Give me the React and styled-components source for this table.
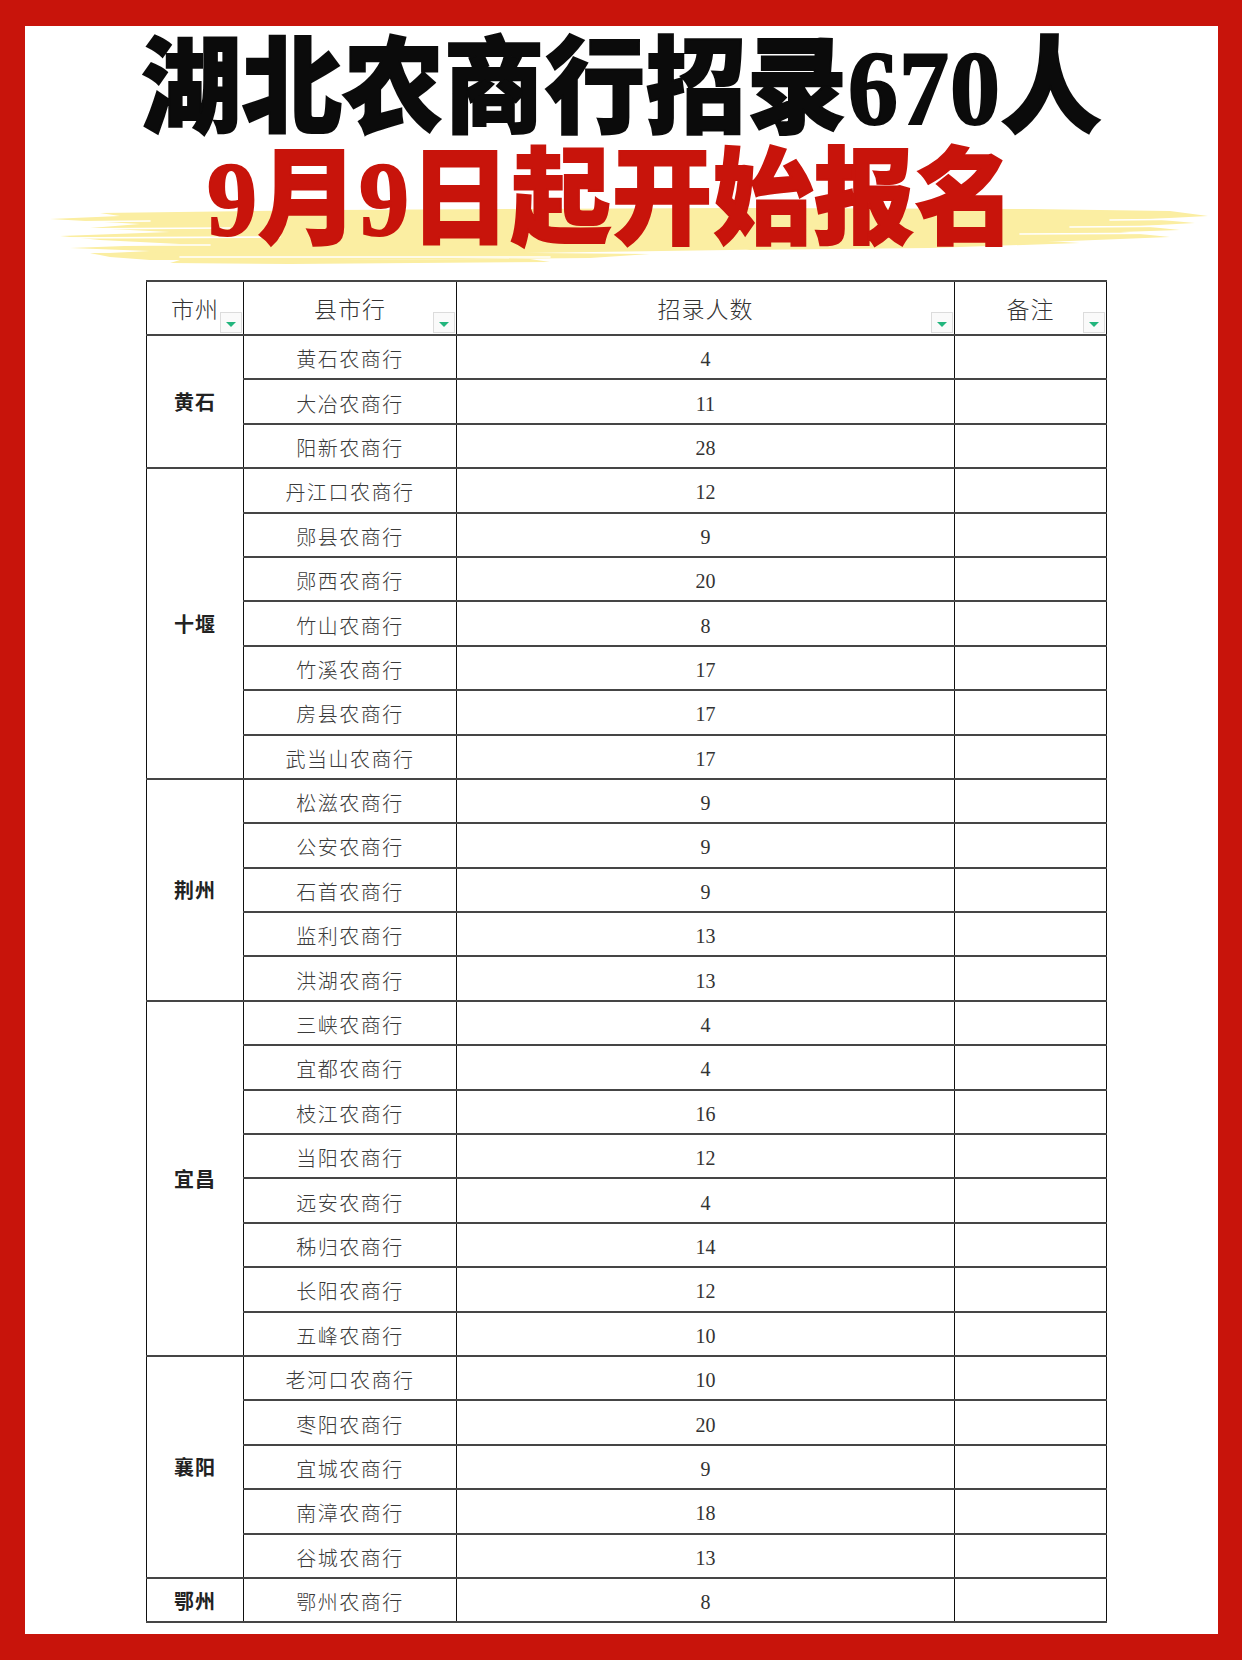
import styled, { createGlobalStyle } from 'styled-components'

const GlobalStyle = createGlobalStyle`
  html, body {
    margin: 0;
    padding: 0;
    background: #ffffff;
  }
  * {
    box-sizing: border-box;
  }
`

const groups = [
  {
    city: '黄石',
    banks: [
      ['黄石农商行', 4],
      ['大冶农商行', 11],
      ['阳新农商行', 28],
    ],
  },
  {
    city: '十堰',
    banks: [
      ['丹江口农商行', 12],
      ['郧县农商行', 9],
      ['郧西农商行', 20],
      ['竹山农商行', 8],
      ['竹溪农商行', 17],
      ['房县农商行', 17],
      ['武当山农商行', 17],
    ],
  },
  {
    city: '荆州',
    banks: [
      ['松滋农商行', 9],
      ['公安农商行', 9],
      ['石首农商行', 9],
      ['监利农商行', 13],
      ['洪湖农商行', 13],
    ],
  },
  {
    city: '宜昌',
    banks: [
      ['三峡农商行', 4],
      ['宜都农商行', 4],
      ['枝江农商行', 16],
      ['当阳农商行', 12],
      ['远安农商行', 4],
      ['秭归农商行', 14],
      ['长阳农商行', 12],
      ['五峰农商行', 10],
    ],
  },
  {
    city: '襄阳',
    banks: [
      ['老河口农商行', 10],
      ['枣阳农商行', 20],
      ['宜城农商行', 9],
      ['南漳农商行', 18],
      ['谷城农商行', 13],
    ],
  },
  {
    city: '鄂州',
    banks: [['鄂州农商行', 8]],
  },
]

/* --- Frame --- */
const Frame = styled.div`
  width: 1242px;
  height: 1660px;
  border-style: solid;
  border-color: #c8140b;
  border-width: 26px 24px 26px 25px;
  background: #ffffff;
  display: flex;
  flex-direction: column;
  align-items: center;
  padding-top: 7px;
`

/* --- Title --- */
const TitleBlock = styled.div`
  width: 100%;
  display: flex;
  flex-direction: column;
  align-items: center;
  font-family: 'Liberation Serif', 'Noto Sans CJK SC', serif;
  font-size: 100px;
  font-weight: 900;
  line-height: 111px;
  letter-spacing: 1px;
`

const TitleLine = styled.div`
  position: relative;
  z-index: 1;
  color: ${(p) => p.$color};
  -webkit-text-stroke: 2px ${(p) => p.$color};
  white-space: nowrap;
  transform: translateX(${(p) => p.$shift || 0}px) scaleY(1.05);
`

const HighlightRow = styled.div`
  position: relative;
  width: 100%;
  display: flex;
  justify-content: center;
`

const Brush = styled.svg`
  position: absolute;
  left: 5px;
  top: 63px;
  width: 1180px;
  height: 62px;
  z-index: 0;
`

const BrushStroke = () => (
  <Brush viewBox="0 0 1180 62" preserveAspectRatio="none">
    <g fill="#fbeea2">
      <polygon points="70,6 300,3 700,1 1000,2 1140,4 1178,9 1120,12 1165,16 1110,19 1150,23 1090,25 1140,30 1040,34 900,38 700,43 420,47 160,49 60,47 120,44 40,41 150,37 70,33 30,29 140,25 60,21 110,17 20,12 90,9" />
      <polygon points="60,46 400,45 620,47 560,51 300,53 120,53 80,50" />
      <polygon points="150,53 500,52 520,55 260,57 140,56" />
      <polygon points="700,38 1000,33 1050,36 900,41 720,43" />
    </g>
    <g stroke="#ffffff" strokeWidth="1.6" fill="none" strokeLinecap="round">
      <line x1="20" y1="22" x2="200" y2="21" />
      <line x1="10" y1="31" x2="250" y2="30" />
      <line x1="40" y1="38" x2="180" y2="38" />
      <line x1="30" y1="15" x2="120" y2="14" />
      <line x1="1040" y1="20" x2="1180" y2="19" />
      <line x1="990" y1="27" x2="1180" y2="26" />
      <line x1="1080" y1="13" x2="1180" y2="12" />
      <line x1="150" y1="50" x2="520" y2="50" />
    </g>
  </Brush>
)

/* --- Table --- */
const Table = styled.table`
  align-self: flex-start;
  margin-top: 25px;
  margin-left: 121px;
  width: 960px;
  border-collapse: collapse;
  table-layout: fixed;
  font-family: 'Noto Sans CJK SC', sans-serif;
  color: #3a3a3a;

  td,
  th {
    border-left: 1.5px solid #111111;
    border-right: 1.5px solid #111111;
    border-top: 2px solid #454545;
    border-bottom: 2px solid #454545;
    padding: 0;
    text-align: center;
    vertical-align: middle;
  }
`

const HeadCell = styled.th`
  position: relative;
  height: 54px;
  font-size: 23px;
  font-weight: 300;
  color: #333333;
  letter-spacing: 1px;
`

const Dropdown = styled.span`
  position: absolute;
  right: 1px;
  bottom: 1px;
  width: 22px;
  height: 21px;
  background: #fafafa;
  border: 1px solid #dcdcdc;
  display: flex;
  align-items: center;
  justify-content: center;

  &::after {
    content: '';
    width: 0;
    height: 0;
    margin-top: 3px;
    border-left: 5px solid transparent;
    border-right: 5px solid transparent;
    border-top: 5px solid #22b57d;
  }
`

const Row = styled.tr`
  height: 44.4px;
`

const CityCell = styled.td`
  font-size: 20px;
  font-weight: 700;
  color: #222222;
  letter-spacing: 1px;
`

const BankCell = styled.td`
  font-size: 20px;
  font-weight: 300;
  letter-spacing: 1.5px;
  padding-top: 3px !important;
`

const NumCell = styled.td`
  font-family: 'Liberation Serif', serif;
  font-size: 20px;
  color: #333333;
  padding-top: 5px !important;
`

const NoteCell = styled.td``

const headers = [
  { label: '市州', width: 97 },
  { label: '县市行', width: 213 },
  { label: '招录人数', width: 498 },
  { label: '备注', width: 152 },
]

export default function App() {
  return (
    <>
      <GlobalStyle />
      <Frame>
        <TitleBlock>
          <TitleLine $color="#0b0b0b">湖北农商行招录670人</TitleLine>
          <HighlightRow>
            <BrushStroke />
            <TitleLine $color="#c8140b" $shift={-10}>
              9月9日起开始报名
            </TitleLine>
          </HighlightRow>
        </TitleBlock>

        <Table>
          <colgroup>
            {headers.map((h) => (
              <col key={h.label} style={{ width: h.width }} />
            ))}
          </colgroup>
          <thead>
            <tr>
              {headers.map((h) => (
                <HeadCell key={h.label}>
                  {h.label}
                  <Dropdown />
                </HeadCell>
              ))}
            </tr>
          </thead>
          <tbody>
            {groups.map((g) =>
              g.banks.map(([bank, count], i) => (
                <Row key={bank}>
                  {i === 0 && (
                    <CityCell rowSpan={g.banks.length}>{g.city}</CityCell>
                  )}
                  <BankCell>{bank}</BankCell>
                  <NumCell>{count}</NumCell>
                  <NoteCell />
                </Row>
              ))
            )}
          </tbody>
        </Table>
      </Frame>
    </>
  )
}
